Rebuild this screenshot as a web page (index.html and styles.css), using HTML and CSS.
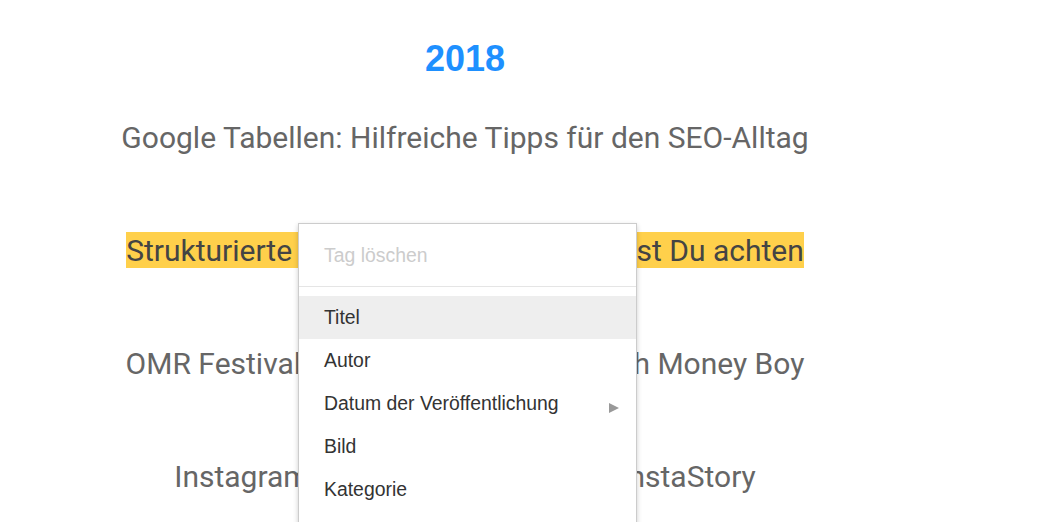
FILE: index.html
```html
<!DOCTYPE html>
<html lang="de">
<head>
<meta charset="utf-8">
<title>Posts</title>
<link rel="stylesheet" href="styles.css">
</head>
<body>
<main class="content">
  <h2 class="year">2018</h2>
  <div class="posts">
    <p class="post"><span>Google Tabellen: Hilfreiche Tipps für den SEO-Alltag</span></p>
    <p class="post"><span class="selected">Strukturierte Daten: Worauf heute musst Du achten</span></p>
    <p class="post"><span>OMR Festival 2018: Auf der Suche nach Money Boy</span></p>
    <p class="post"><span>Instagram Stories: So klappt eine InstaStory</span></p>
  </div>
</main>
<div class="menu">
  <div class="item disabled">Tag löschen</div>
  <div class="divider"></div>
  <div class="item active">Titel</div>
  <div class="item">Autor</div>
  <div class="item has-sub">Datum der Veröffentlichung<span class="arrow"></span></div>
  <div class="item">Bild</div>
  <div class="item">Kategorie</div>
</div>
</body>
</html>
```
FILE: styles.css
```css
html, body {
  margin: 0;
  padding: 0;
  overflow: hidden;
  background: #fff;
  height: 100%;
}
.content {
  width: 930px;
  text-align: center;
  font-family: Roboto, "Liberation Sans", sans-serif;
}
.year {
  margin: 0;
  padding-top: 39px;
  height: 40px;
  line-height: 40px;
  font-family: "Liberation Sans", Arial, sans-serif;
  font-weight: bold;
  font-size: 36px;
  color: #1e90ff;
}
.posts {
  display: flex;
  flex-direction: column;
  gap: 77px;
  margin-top: 41px;
}
.post {
  margin: 0;
  line-height: 36px;
  font-size: 30px;
  color: #666;
}
.selected {
  background: #ffd04b;
  color: #444;
  padding: 1px 0 0;
}
.menu {
  position: absolute;
  left: 298px;
  top: 223px;
  width: 337px;
  height: 310px;
  border: 1px solid #ccc;
  background: #fff;
  box-shadow: 0 2px 5px rgba(0,0,0,0.2);
  padding-top: 10px;
  font-family: "Liberation Sans", Arial, sans-serif;
  font-size: 19.4px;
  color: #333;
}
.item {
  position: relative;
  height: 43px;
  line-height: 43px;
  padding-left: 25px;
}
.item.disabled {
  color: #ccc;
}
.item.active {
  background: #eee;
}
.divider {
  height: 1px;
  background: #e5e5e5;
  margin: 9px 0;
}
.arrow {
  position: absolute;
  right: 17px;
  top: 21px;
  width: 0;
  height: 0;
  border-top: 5px solid transparent;
  border-bottom: 5px solid transparent;
  border-left: 10px solid #999;
}
```
